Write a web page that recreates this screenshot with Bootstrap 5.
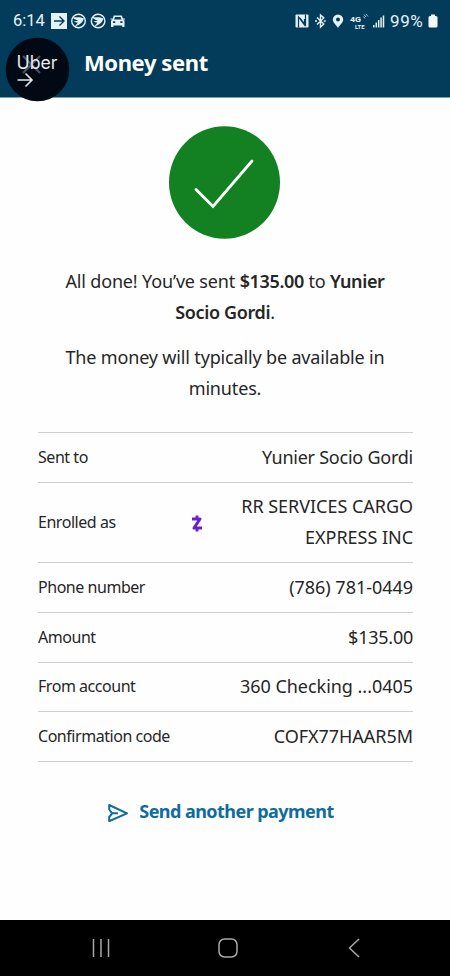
<!DOCTYPE html>
<html lang="en">
<head>
  <meta charset="UTF-8">
  <meta name="viewport" content="width=device-width, initial-scale=1.0">
  <title>Money sent</title>

  <!-- Bootstrap CSS -->
  <link href="https://cdn.jsdelivr.net/npm/bootstrap@5.3.2/dist/css/bootstrap.min.css" rel="stylesheet">

  <style>
    body {
      min-height: 976px;
      color: #262626;
      background-color: #fefefe;
      font-family: "Noto Sans", "Open Sans", sans-serif;
      font-size: 18px;
      line-height: 31px;
      overflow: hidden;
    }

    .app-header {
      height: 98px;
      color: #fff;
      background-color: #033c5a;
      border-bottom: 1px solid #7f9fae;
    }

    .status-bar {
      height: 42px;
      padding: 0 12px 0 13px;
      color: #e6f1f5;
      font-family: Roboto, sans-serif;
      font-size: 16px;
      line-height: 42px;
    }

    .clock {
      width: 33px;
      font-size: 16.5px;
    }

    .battery-text {
      width: 39px;
      padding-left: 1px;
      font-size: 17px;
      letter-spacing: .6px;
      white-space: nowrap;
    }

    .status-bar svg,
    .send-link svg,
    .phone-nav svg {
      display: block;
      flex: none;
    }

    .page-title {
      margin: 0;
      padding-left: 84px;
      font-size: 22px;
      font-weight: 700;
      line-height: 40px;
      letter-spacing: -.4px;
    }

    /* floating Uber bubble over the header */
    .uber-bubble {
      top: 37px;
      left: 5px;
      z-index: 2;
    }

    .done-icon {
      display: block;
      margin: 28px auto 27px;
    }

    .message {
      margin-bottom: 14px;
      letter-spacing: -.16px;
    }

    .message b {
      font-weight: 600;
      letter-spacing: -.36px;
    }

    .details {
      margin: 28px 37px 0 38px;
      border-top: 1px solid #d0d0d0;
    }

    .detail-row {
      padding: 8.6px 0 9.1px;
      border-bottom: 1px solid #d0d0d0;
    }

    .detail-label {
      font-size: 16px;
      letter-spacing: -.46px;
    }

    .detail-value {
      text-align: right;
      letter-spacing: -.24px;
    }

    .detail-value.wide {
      letter-spacing: -.03px;
    }

    .zelle {
      margin: 3px 38px 0 auto;
    }

    .send-link {
      margin-top: 34px;
      padding-right: 9px;
      color: #0f6c9c;
      font-weight: 700;
      letter-spacing: -.55px;
      text-decoration: none;
    }

    .phone-nav {
      height: 56px;
      background-color: #000;
      padding: 0 90px 0 91px;
    }
  </style>
</head>
<body class="d-flex flex-column position-relative">
  <header class="app-header">
    <div class="status-bar d-flex align-items-center justify-content-between">
      <div class="d-flex align-items-center">
        <span class="clock">6:14</span>
        <svg class="ms-1" width="77" height="18" viewBox="0 0 77 18">
          <!-- arrow tile -->
          <path fill="#e6f1f5" d="M1 1h16v16H1z"/>
          <path fill="none" stroke="#033c5a" stroke-width="1.4" d="M4 9h10M9.500 4.500 14 9l-4.500 4.500"/>
          <!-- bird badges -->
          <g id="bird">
            <circle cx="28.500" cy="9" r="6.800" fill="none" stroke="#e6f1f5" stroke-width="1.400"/>
            <path fill="#e6f1f5" d="M22.500 4.800c3 1 6 .2 8.500.7 1 .3 1.600.8 3 1-1 2.500-2.200 4.300-4 5.500-1.500 1-3.300 1.300-5 3 .2-2.400 2.400-3.200 2.800-4.600-1.500 0-3-.3-4-1.200 1.500.2 3.300 0 4.400-.7-2.400-.5-4.700-1.500-5.700-3.700z"/>
          </g>
          <use href="#bird" x="19.600"/>
          <!-- car -->
          <path fill="#e6f1f5" fill-rule="evenodd" d="M63.800 3.500h8l1.500 4 1.200 1.200V15h-2.300v-1.600h-8.800V15H61V8.700l1.300-1.200zM65 5l-.9 2.500h7.400L70.600 5zM63 9.300v1.600h2.200V9.300zm7.300 0v1.600h2.200V9.300z"/>
          <path stroke="#e6f1f5" d="M60.500 7h2M73 7h2"/>
        </svg>
      </div>
      <div class="d-flex align-items-center">
        <svg width="94" height="20" viewBox="0 0 94 20">
          <!-- NFC -->
          <rect x=".5" y="3.500" width="13" height="13" rx="1" fill="#e6f1f5"/>
          <path fill="none" stroke="#033c5a" stroke-width="1.200" d="M3.500 16.500V6l6 8V8M10.500 3.500V14l-6-7.500"/>
          <!-- bluetooth -->
          <path fill="none" stroke="#e6f1f5" stroke-width="1.400" d="M22 6.500l6.800 6.600-3.300 3V4l3.300 2.900-6.800 6.600"/>
          <path stroke="#e6f1f5" stroke-width="1.600" d="M20 10h2M28.800 10h2"/>
          <!-- location pin -->
          <path fill="#e6f1f5" fill-rule="evenodd" d="M43 3.500a5.200 5.200 0 0 1 5.200 5.200c0 3-3.400 5-5.200 8.300-1.800-3.300-5.200-5.300-5.200-8.300A5.200 5.200 0 0 1 43 3.500zm0 3a2 2 0 1 0 0 4 2 2 0 0 0 0-4z"/>
          <text x="55" y="10.500" fill="#e6f1f5" font-size="7.500" font-weight="700" textLength="11" lengthAdjust="spacingAndGlyphs">4G</text>
          <text x="60" y="17.800" fill="#e6f1f5" font-size="5.500" font-weight="700" textLength="9.500" lengthAdjust="spacingAndGlyphs">LTE</text>
          <path fill="none" stroke="#b4cbd5" stroke-width=".9" d="M69 3.500l2 2.500M71 3l2 2.500M68.500 5.500l1.500 2"/>
          <!-- signal -->
          <path fill="none" stroke="#e6f1f5" stroke-width="1.500" d="M78.800 16.500V14M81.300 16.500v-5M83.700 16.500V9M86.100 16.500V6.500M88.500 16.500v-12"/>
        </svg>
        <span class="battery-text">99%</span>
        <svg width="10" height="14" viewBox="0 0 10 14">
          <path fill="#f4f8fa" d="M3 .5h4V2h1a1.500 1.500 0 0 1 1.500 1.500V12A1.500 1.500 0 0 1 8 13.500H2A1.500 1.500 0 0 1 .5 12V3.500A1.500 1.500 0 0 1 2 2h1z"/>
        </svg>
      </div>
    </div>
    <h1 class="page-title">Money sent</h1>
  </header>

  <svg class="uber-bubble position-absolute" width="66" height="66" viewBox="0 0 66 66">
    <circle cx="32.500" cy="32.500" r="31.800" fill="#000914"/>
    <path stroke="#46535e" stroke-width="2.200" d="M18 19l17 17M35 19 18 36"/>
    <text x="11.500" y="31.500" fill="#e5e9ee" font-family="Inter, sans-serif" font-size="18" textLength="41" lengthAdjust="spacingAndGlyphs">Uber</text>
    <path fill="none" stroke="#e5e9ee" stroke-width="1.600" d="M12.500 43H27M20.500 36.500 27 43l-6.500 6.500"/>
  </svg>

  <main class="flex-grow-1">
    <svg class="done-icon" width="112" height="113" viewBox="0 0 112 113">
      <ellipse cx="55.500" cy="56.500" rx="55.500" ry="56.300" fill="#138021"/>
      <path fill="none" stroke="#fff" stroke-width="2.800" stroke-linecap="round" d="M27 63.500 44 80.500l39-45.500"/>
    </svg>

    <div class="text-center">
      <p class="message">All done! You’ve sent <b>$135.00</b> to <b>Yunier<br>Socio Gordi</b>.</p>
      <p class="message">The money will typically be available in<br>minutes.</p>
    </div>

    <div class="details">
      <div class="detail-row d-flex align-items-center justify-content-between">
        <span class="detail-label">Sent to</span>
        <span class="detail-value">Yunier Socio Gordi</span>
      </div>
      <div class="detail-row d-flex align-items-center">
        <span class="detail-label">Enrolled as</span>
        <!-- Zelle mark -->
        <svg class="zelle" width="12" height="19" viewBox="0 0 12 19">
          <path fill="none" stroke="#6a1fc8" stroke-width="3" stroke-linejoin="round" d="M1 5h8L3 14h8"/>
          <path stroke="#6a1fc8" stroke-width="2.800" d="M6 1.500V5M6 14v3.500"/>
        </svg>
        <span class="detail-value wide">RR SERVICES CARGO<br>EXPRESS INC</span>
      </div>
      <div class="detail-row d-flex align-items-center justify-content-between">
        <span class="detail-label">Phone number</span>
        <span class="detail-value wide">(786) 781-0449</span>
      </div>
      <div class="detail-row d-flex align-items-center justify-content-between">
        <span class="detail-label">Amount</span>
        <span class="detail-value">$135.00</span>
      </div>
      <div class="detail-row d-flex align-items-center justify-content-between">
        <span class="detail-label">From account</span>
        <span class="detail-value wide">360 Checking ...0405</span>
      </div>
      <div class="detail-row d-flex align-items-center justify-content-between">
        <span class="detail-label">Confirmation code</span>
        <span class="detail-value wide">COFX77HAAR5M</span>
      </div>
    </div>

    <a href="#" class="send-link d-flex align-items-center justify-content-center">
      <svg class="me-2" width="24" height="20" viewBox="0 0 24 20">
        <path fill="none" stroke="#0f6c9c" stroke-width="2" stroke-linejoin="round" d="M2.200 3 20 11.300 2.200 19.200V15l3-3.700-3-3.800zM5 11.300h6"/>
      </svg>
      <span class="send-text">Send another payment</span>
    </a>
  </main>

  <footer class="phone-nav d-flex align-items-center justify-content-between">
    <svg width="20" height="20" viewBox="0 0 20 20">
      <path stroke="#a9a9a9" stroke-width="1.500" d="M2.500 1v18M10 1v18M17.500 1v18"/>
    </svg>
    <svg class="me-1" width="20" height="20" viewBox="0 0 20 20">
      <rect x="1" y="1" width="18" height="18" rx="5.500" fill="none" stroke="#a9a9a9" stroke-width="1.500"/>
    </svg>
    <svg width="12" height="20" viewBox="0 0 12 20">
      <path fill="none" stroke="#a9a9a9" stroke-width="1.500" d="M11 1 1.500 10l9.500 9"/>
    </svg>
  </footer>

  <!-- Bootstrap JS -->
  <script src="https://cdn.jsdelivr.net/npm/bootstrap@5.3.2/dist/js/bootstrap.bundle.min.js"></script>
</body>
</html>
